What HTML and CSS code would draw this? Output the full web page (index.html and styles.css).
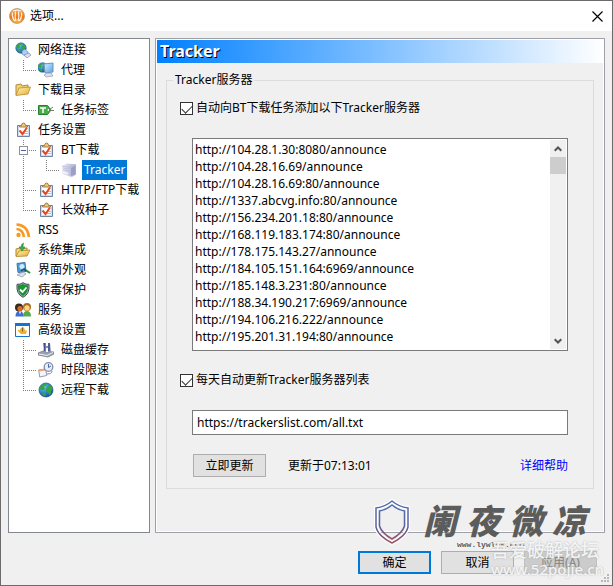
FILE: index.html
```html
<!DOCTYPE html>
<html lang="zh-CN">
<head>
<meta charset="utf-8">
<title>选项</title>
<link rel="stylesheet" href="styles.css">
</head>
<body>
<svg class="defs" aria-hidden="true">
  <defs>
    <linearGradient id="orange" x1="0" y1="0" x2="0" y2="1"><stop offset="0" stop-color="#fbb45e"/><stop offset=".6" stop-color="#ec7416"/><stop offset="1" stop-color="#ffb840"/></linearGradient>
    <linearGradient id="folder" x1="0" y1="0" x2="1" y2="1"><stop offset="0" stop-color="#fff6b8"/><stop offset="1" stop-color="#e8a92c"/></linearGradient>
    <linearGradient id="screen" x1="0" y1="0" x2="1" y2="1"><stop offset="0" stop-color="#d8f3ff"/><stop offset="1" stop-color="#4da3ee"/></linearGradient>
    <linearGradient id="server" x1="0" y1="0" x2="1" y2="0"><stop offset="0" stop-color="#eeeefa"/><stop offset="1" stop-color="#a6a7cf"/></linearGradient>
    <linearGradient id="crest" x1="0" y1="0" x2="0" y2="1"><stop offset="0" stop-color="#536ead"/><stop offset=".6" stop-color="#5960a5"/><stop offset="1" stop-color="#9c5362"/></linearGradient>
    <radialGradient id="ocean" cx=".35" cy=".3" r=".75"><stop offset="0" stop-color="#65c8ff"/><stop offset="1" stop-color="#0b4d9f"/></radialGradient>
    <symbol id="globe" viewBox="0 0 16 16">
      <circle cx="8" cy="8" r="7" fill="url(#ocean)" stroke="#174d85" stroke-width=".7"/>
      <path d="M2 5l3-3 4-.5-1 2-2 1 1 2-2 2-2-1-2 1zM9 5l3-2 2 2 .7 3-2 1 .5 2-2 2.500-1-3-2-1-.5-2zM5 10l3 2-1 2.500L4 12z" fill="#35a545"/>
    </symbol>
    <symbol id="task" viewBox="0 0 16 16">
      <path d="M2.500 3.500h12v11h-12z" fill="#c9dcf3" stroke="#6d86a8"/>
      <path d="M4 5h9v8H4z" fill="#fff"/><path d="M9 11.500h4M10 9.500h3" stroke="#aebdd0"/>
      <path d="M4.500 5V3.500h2q0-2.500 2-2.500t2 2.500h2V5z" fill="#f4c870" stroke="#93764a" stroke-width=".9"/>
      <path d="M4.500 8.500l3 3.500 4.500-6.500" fill="none" stroke="#df4729" stroke-width="2"/>
    </symbol>
  </defs>
</svg>
<div class="window">
  <header class="titlebar">
    <svg class="icon" viewBox="0 0 16 16"><circle cx="8" cy="8" r="7.500" fill="url(#orange)" stroke="#b98a66" stroke-width=".7"/><path d="M3.500 4.500C3 8 4 11 6 13M6.500 3.500C6 7 6 10 7 13M9.500 3.500C10 7 10 10 9 13M12.500 4.500C13 8 12 11 10 13" fill="none" stroke="#fff3dc" stroke-width="1.200"/><path d="M4 3Q8 1 12 3" stroke="#fff" fill="none"/></svg>
    <h1 class="title">选项...</h1>
    <button class="close" type="button" aria-label="关闭"><svg viewBox="0 0 11 11"><path d="M.5.5l10 10M10.500.5l-10 10" stroke="#000" stroke-width="1.200"/></svg></button>
  </header>

  <main class="content">
    <nav class="tree">
      <ul class="branch">
        <li><div class="node"><svg class="icon" viewBox="0 0 16 16"><use href="#globe" x="0" y="0" width="12" height="12"/><path d="M7 9l3-2 3 3v3l-3 1-3-2z" fill="#a9cdf8" stroke="#6b86b0" stroke-width=".7"/><path d="M9 13l5-2 2 2-4 3z" fill="#dbe2ee" stroke="#7d8aa3" stroke-width=".7"/></svg><span class="label">网络连接</span></div>
          <ul class="branch">
            <li><div class="node"><svg class="icon" viewBox="0 0 16 16"><use href="#globe" x="-1" y="0" width="11" height="11"/><path d="M6 2l9-1v9l-8 1z" fill="url(#screen)" stroke="#7192b9"/><path d="M9 11h4l2 3-7 1-2-2z" fill="#dce0ed" stroke="#8f98aa" stroke-width=".7"/></svg><span class="label">代理</span></div></li>
          </ul>
        </li>
        <li><div class="node"><svg class="icon" viewBox="0 0 16 16"><path d="M1 13V3l5-1 1 2 6-1v3" fill="#f7d46c" stroke="#a98b46"/><path d="M1 13.500L4 6l11.500-1L13 12z" fill="url(#folder)" stroke="#b58c32" stroke-width=".8"/></svg><span class="label">下载目录</span></div>
          <ul class="branch">
            <li><div class="node"><svg class="icon" viewBox="0 0 16 16"><path d="M.5 3.500h9L13 8l-3.500 4.500h-9z" fill="#48ad4b" stroke="#24802f"/><path d="M2 6h6M5 6v5" stroke="#fff" stroke-width="1.500"/><circle cx="10.500" cy="8" r="1" fill="#fff"/><path d="M11 8l4-3M11 8.500h5" stroke="#638066" fill="none"/></svg><span class="label">任务标签</span></div></li>
          </ul>
        </li>
        <li><div class="node"><svg class="icon"><use href="#task"/></svg><span class="label">任务设置</span></div>
          <ul class="branch">
            <li class="open"><div class="node"><button class="toggle" type="button" aria-label="折叠"></button><svg class="icon"><use href="#task"/></svg><span class="label">BT下载</span></div>
              <ul class="branch">
                <li><div class="node"><svg class="icon" viewBox="0 0 16 16"><path d="M1 4l5-2.500 9 1v10L11 15 1 12z" fill="url(#server)"/><path d="M1 4l8 1.500 6-3M9 5.500v9M2 6l6 1M2 8l6 1" fill="none" stroke="#b9bad4" stroke-width=".8"/><path d="M10 6l4-2v8l-4 2z" fill="#9c9dc8"/><path d="M2 10.500l5 1" stroke="#fff"/></svg><span class="label selected">Tracker</span></div></li>
              </ul>
            </li>
            <li><div class="node"><svg class="icon"><use href="#task"/></svg><span class="label">HTTP/FTP下载</span></div></li>
            <li><div class="node"><svg class="icon"><use href="#task"/></svg><span class="label">长效种子</span></div></li>
          </ul>
        </li>
        <li><div class="node"><svg class="icon" viewBox="0 0 16 16"><circle cx="3.500" cy="13" r="2.200" fill="#f79a22"/><path d="M1.500 7Q8 7.500 9 15M1.500 2.500Q12.500 3 14 15" fill="none" stroke="#f79a22" stroke-width="2.600"/></svg><span class="label">RSS</span></div></li>
        <li><div class="node"><svg class="icon" viewBox="0 0 16 16"><path d="M1 14V7l4-1 1 1 6-1v3" fill="#f5db73" stroke="#a9853a"/><path d="M1 14.500L4 9l11-1-3 6z" fill="url(#folder)" stroke="#ae862c" stroke-width=".8"/><path d="M8.500 1Q6 2 6 5H4l3 4 3-4H8Q8 3 8.500 1z" fill="#3caf43" stroke="#28843a" stroke-width=".6"/></svg><span class="label">系统集成</span></div></li>
        <li><div class="node"><svg class="icon" viewBox="0 0 16 16"><path d="M2 1.500l8-1 1 9-8 1z" fill="#4a9ddf" stroke="#477098"/><circle cx="7" cy="4.500" r="2.500" fill="#c9edff"/><path d="M2 13l6-3 3 2-4 3z" fill="#dbe1ea" stroke="#8993a5" stroke-width=".7"/><path d="M9 7l6 4" stroke="#228a3c" stroke-width="2"/><path d="M6 9l3-2 2 2" stroke="#294876" fill="none" stroke-width="1.500"/></svg><span class="label">界面外观</span></div></li>
        <li><div class="node"><svg class="icon" viewBox="0 0 16 16"><path d="M8 .7q3 2 6 1.600Q15 12 8 15.300 1 12 2 2.300 5 2.700 8 .7z" fill="#9fb0b3" stroke="#3e4f52"/><path d="M8 2.500q2 1.200 4.500 1.200Q13 10.500 8 13.500 3 10.500 3.500 3.700 6 3.700 8 2.500z" fill="#129c2b" stroke="#0a6e1b" stroke-width=".6"/><path d="M5 7.500l2.500 2.500 4-4.500" fill="none" stroke="#fff" stroke-width="1.800"/></svg><span class="label">病毒保护</span></div></li>
        <li><div class="node"><svg class="icon" viewBox="0 0 16 16"><circle cx="4" cy="5.500" r="4" fill="#38291f"/><circle cx="5" cy="6.500" r="2.600" fill="#d76c29"/><path d="M.5 14.500q0-5.500 4-5.500t4 5.500z" fill="#406cce"/><circle cx="12" cy="5" r="4" fill="#a76d21"/><circle cx="12" cy="6" r="2.700" fill="#ffd47c"/><path d="M8 14.500q0-5.500 4-5.500t4 5.500z" fill="#51ad4b"/><path d="M4 9.500l1 3 1-3" fill="#fff"/></svg><span class="label">服务</span></div></li>
        <li><div class="node"><svg class="icon" viewBox="0 0 16 16"><path d="M.5 1.500h14v13H.5z" fill="#fff" stroke="#1673cf"/><path d="M0 1h15v3H0z" fill="#1673cf"/><path d="M3 7.500l2 1V7l2-1.500h2l1 3h2l-1 3.500H6L3 9z" fill="#efb12d"/><path d="M7.500 5.500v4" stroke="#8c631b"/></svg><span class="label">高级设置</span></div>
          <ul class="branch">
            <li><div class="node"><svg class="icon" viewBox="0 0 16 16"><path d="M0 11l5-2 11 1v2l-6 3-10-2z" fill="#9ca3ad" stroke="#6f7680" stroke-width=".7"/><path d="M1 12l8 1.500 6-3" stroke="#edf0f5" fill="none"/><path d="M5 1h7l1 9-6 1z" fill="#8291b6"/><path d="M6.500 1v8M11 1v8" stroke="#434e87" stroke-width="1.500"/><path d="M8 1h2v3H8zM8 6h2v4H8z" fill="#fff"/></svg><span class="label">磁盘缓存</span></div></li>
            <li><div class="node"><svg class="icon" viewBox="0 0 16 16"><path d="M.7 8l7-1 1 6.500-7 1.500z" fill="#f4f6fb" stroke="#8d9cb4"/><path d="M.7 7.500l7-1v2l-7 1z" fill="#f5a06e"/><circle cx="10.500" cy="5" r="4.300" fill="#e6eefb" stroke="#8190ad" stroke-width="1.300"/><path d="M10.500 2v3.500L13 4" fill="none" stroke="#526b98"/><path d="M9 12q5 0 5-3" fill="none" stroke="#7b8699"/></svg><span class="label">时段限速</span></div></li>
            <li><div class="node"><svg class="icon"><use href="#globe"/></svg><span class="label">远程下载</span></div></li>
          </ul>
        </li>
      </ul>
    </nav>

    <section class="panel">
      <h2 class="banner">Tracker</h2>
      <fieldset class="group">
        <legend>Tracker服务器</legend>
        <label class="check"><input type="checkbox" checked><span>自动向BT下载任务添加以下Tracker服务器</span></label>
        <div class="listbox">
          <textarea rows="12" aria-label="Tracker服务器列表" spellcheck="false" wrap="off">http://104.28.1.30:8080/announce
http://104.28.16.69/announce
http://104.28.16.69:80/announce
http://1337.abcvg.info:80/announce
http://156.234.201.18:80/announce
http://168.119.183.174:80/announce
http://178.175.143.27/announce
http://184.105.151.164:6969/announce
http://185.148.3.231:80/announce
http://188.34.190.217:6969/announce
http://194.106.216.222/announce
http://195.201.31.194:80/announce</textarea>
          <div class="scrollbar">
            <button type="button" aria-label="向上"><svg viewBox="0 0 8 6"><path d="M.7 4.800L4 1.500l3.300 3.300" fill="none" stroke="#555" stroke-width="2"/></svg></button>
            <div class="thumb"></div>
            <button type="button" aria-label="向下"><svg viewBox="0 0 8 6"><path d="M.7 1.200L4 4.500l3.300-3.300" fill="none" stroke="#555" stroke-width="2"/></svg></button>
          </div>
        </div>
        <label class="check"><input type="checkbox" checked><span>每天自动更新Tracker服务器列表</span></label>
        <input class="url" type="text" aria-label="更新地址" value="https://trackerslist.com/all.txt">
        <div class="update">
          <button class="button" type="button">立即更新</button>
          <span>更新于07:13:01</span>
          <a href="#help">详细帮助</a>
        </div>
      </fieldset>
    </section>
  </main>

  <footer class="actions">
    <button class="button primary" type="button">确定</button>
    <button class="button" type="button">取消</button>
    <button class="button" type="button" disabled>应用(A)</button>
  </footer>

  <svg class="grip" viewBox="0 0 8 8"><path d="M6 0h2v2H6zM3 3h2v2H3zM6 3h2v2H6zM0 6h2v2H0zM3 6h2v2H3zM6 6h2v2H6z" fill="#b8b8b8"/></svg>
  <div class="signature">
    <svg viewBox="0 0 38 46"><path d="M19 2q7 6 16 7v19q-2 9-16 16Q5 37 3 28V9q9-1 16-7z" fill="none" stroke="#fff" stroke-width="4"/><path d="M19 2q7 6 16 7v19q-2 9-16 16Q5 37 3 28V9q9-1 16-7z" fill="none" stroke="url(#crest)" stroke-width="1.500"/><path d="M19 6q6 5 12.500 6v15q-2 7-12.500 13Q8.500 34 6.500 27V12Q13 11 19 6z" fill="none" stroke="url(#crest)" stroke-width="1.500"/></svg>
    <div class="brush"><span>阑</span><span>夜</span><span>微</span><span>凉</span></div>
    <small>www.lywlhk.com</small>
  </div>
  <div class="watermark"><span>吾爱破解论坛</span><span class="site">www.52pojie.cn</span></div>
</div>
</body>
</html>
```
FILE: styles.css
```css
* { box-sizing: border-box; }

body {
  margin: 0;
  color: #000;
  font: 12px/16px "Noto Sans", "Noto Sans CJK SC", sans-serif;
}

button, input, textarea { font: inherit; color: inherit; }
h1, h2, ul { margin: 0; padding: 0; font: inherit; list-style: none; }
.defs { position: absolute; width: 0; height: 0; }

.window {
  position: relative;
  display: flex;
  flex-direction: column;
  min-height: 100vh;
  border: 1px solid #6b6b6f;
  background: #f0f0f0;
  overflow: hidden;
}

.icon { flex: none; width: 16px; height: 16px; }

.titlebar {
  display: flex;
  align-items: center;
  gap: 5px;
  height: 30px;
  padding: 0 9px 0 8px;
  background: #fff;
}
.title { flex: 1; }
.close { display: flex; padding: 0; border: 0; background: none; }
.close svg { width: 11px; height: 11px; }

.content { flex: 1; display: flex; gap: 5px; padding: 7px 7px 0; }

.tree {
  flex: none;
  width: 142px;
  padding: 1px 0 0 6px;
  border: 1px solid #828790;
  background: #fff;
}
.node { display: flex; align-items: center; gap: 5px; height: 20px; }
.label { padding: 2px; line-height: 16px; white-space: nowrap; }
.selected { background: #0078d7; color: #fff; }
.branch .branch { padding-left: 23px; }
.branch .branch > li { position: relative; }
.branch .branch > li::before,
.branch .branch > li::after { content: ""; position: absolute; left: -15px; }
.branch .branch > li::before {
  top: 0;
  bottom: 0;
  width: 1px;
  background: repeating-linear-gradient(#808080 0 1px, transparent 1px 2px);
}
.branch .branch > li:last-child::before { bottom: auto; height: 11px; }
.branch .branch > li::after {
  top: 10px;
  width: 14px;
  height: 1px;
  background: repeating-linear-gradient(90deg, #808080 0 1px, transparent 1px 2px);
}
.toggle {
  position: absolute;
  z-index: 1;
  left: -19px;
  top: 6px;
  width: 9px;
  height: 9px;
  padding: 0;
  border: 1px solid #919191;
  background: linear-gradient(#4b63a7, #4b63a7) center / 5px 1px no-repeat #fff;
}

.panel { flex: 1; min-width: 0; border: 1px solid #a0a0a8; outline: 1px solid #fff; outline-offset: -2px; padding: 1px; }
.banner {
  height: 23px;
  padding-left: 3px;
  background: linear-gradient(90deg, #0080ff, #fff);
  color: #fff;
  font-size: 16px;
  font-weight: 700;
  line-height: 23px;
  text-shadow: 1px 1px #000;
}
.group {
  display: flex;
  flex-direction: column;
  min-width: 0;
  margin: 9px 9px 0;
  padding: 12px 25px 11px 13px;
  border: 1px solid #dcdcdc;
}
.group legend { margin-left: -7px; padding: 0 2px; }
.check { display: flex; align-items: center; gap: 3px; }
.check input {
  appearance: none;
  width: 13px;
  height: 13px;
  margin: 0;
  border: 1px solid #333;
  background: #fff;
}
.check input:checked::before {
  content: "";
  display: block;
  width: 9px;
  height: 5px;
  margin: 2px 0 0 1px;
  border: solid #333;
  border-width: 0 0 1px 1px;
  transform: rotate(-45deg);
}

.listbox {
  display: flex;
  margin: 22px 0 21px 12px;
  border: 1px solid #7a7a7a;
  background: #fff;
}
.listbox textarea {
  flex: 1;
  min-width: 0;
  padding: 2px 2px 5px;
  border: 0;
  outline: 0;
  resize: none;
  overflow: hidden;
  background: none;
  line-height: 17px;
}
.scrollbar {
  display: flex;
  flex-direction: column;
  width: 16px;
  margin: 1px 1px 1px 0;
  background: #f0f0f0;
}
.scrollbar button {
  display: flex;
  align-items: center;
  justify-content: center;
  height: 17px;
  padding: 0;
  border: 0;
  background: none;
}
.scrollbar button svg { width: 8px; height: 6px; }
.scrollbar button:last-child { margin-top: auto; }
.thumb { height: 17px; background: #cdcdcd; }

.url {
  height: 25px;
  margin: 22px 0 19px 12px;
  padding: 0 4px;
  border: 1px solid #7a7a7a;
  background: #fff;
}

.update { display: flex; align-items: center; gap: 22px; margin-left: 13px; }
.update a { margin-left: auto; color: #00f; text-decoration: none; }

.button {
  width: 73px;
  height: 23px;
  padding: 0;
  border: 1px solid #adadad;
  background: #e1e1e1;
}
.primary { border: 2px solid #0078d7; }
.button:disabled { border-color: #bfbfbf; background: #ccc; color: #838383; }

.actions { display: flex; justify-content: flex-end; gap: 10px; padding: 18px 15px 11px; }

.grip { position: absolute; right: 3px; bottom: 3px; width: 8px; height: 8px; }
.signature {
  position: absolute;
  right: 26px;
  bottom: 36px;
  display: grid;
  grid-template-columns: 38px auto;
  column-gap: 12px;
  color: #5c5c5c;
  pointer-events: none;
}
.signature svg { grid-row: 1 / 3; width: 38px; height: 46px; }
.brush { display: flex; gap: 9px; font: italic 900 34px/42px "Noto Sans CJK SC", sans-serif; }
.signature small { padding-left: 34px; font: 700 8px/8px "Liberation Mono", monospace; }
.watermark {
  position: absolute;
  right: 8px;
  bottom: 6px;
  display: flex;
  flex-direction: column;
  color: rgba(255, 255, 255, .85);
  font: 500 18px/20px "Noto Sans CJK SC", sans-serif;
  text-shadow: 0 0 2px #aaa;
  pointer-events: none;
}
.site { font: 500 15px/20px "Noto Sans", sans-serif; }
```
